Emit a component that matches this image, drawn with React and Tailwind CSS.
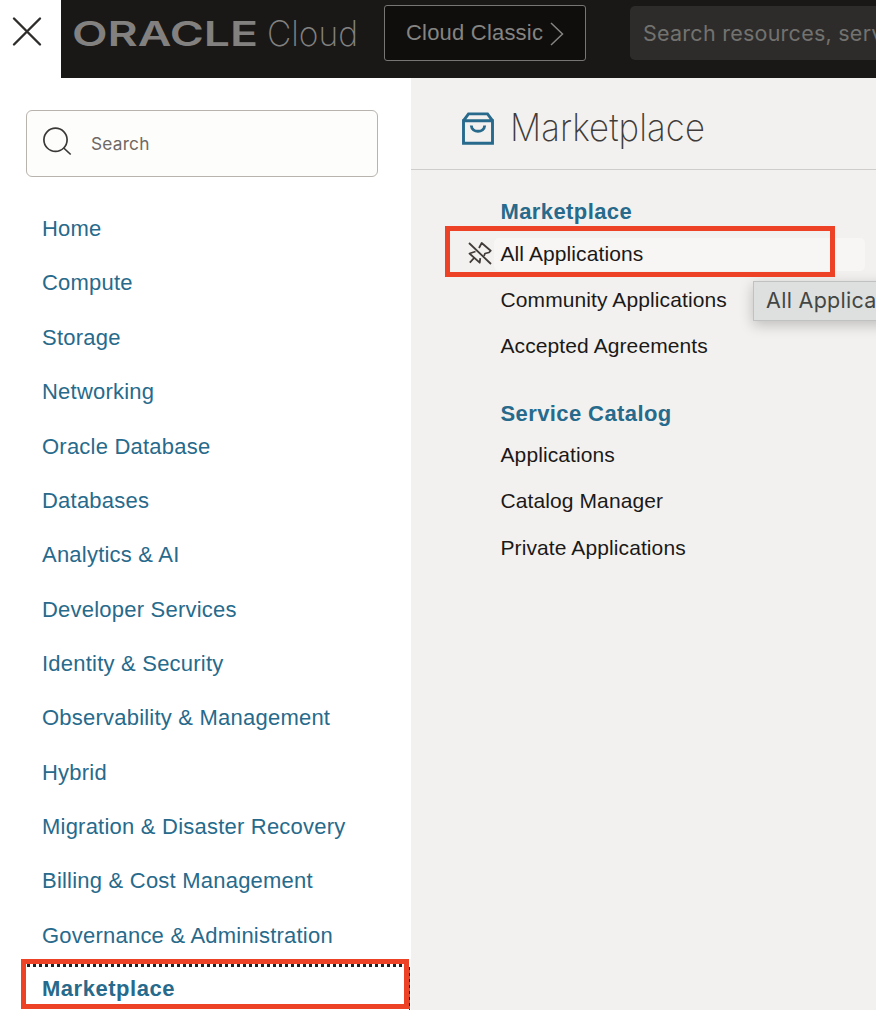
const services = [
  'Home', 'Compute', 'Storage', 'Networking', 'Oracle Database', 'Databases',
  'Analytics & AI', 'Developer Services', 'Identity & Security',
  'Observability & Management', 'Hybrid', 'Migration & Disaster Recovery',
  'Billing & Cost Management', 'Governance & Administration',
];

function Header() {
  return (
    <header className="flex h-[78px] shrink-0">
      <button aria-label="Close" className="flex w-[61px] shrink-0 items-start bg-white pl-3 pt-4">
        <svg width="30" height="31" viewBox="0 0 30 31" fill="none" stroke="#2f2d2b" strokeWidth="2.4" strokeLinecap="round">
          <path d="M2 2.5 28 28.5M28 2.5 2 28.5" />
        </svg>
      </button>
      <div className="flex min-w-0 flex-1 items-start bg-[#191816]">
        <svg className="ml-3 shrink-0" width="290" height="60" viewBox="0 -12 290 60" fill="#828180">
          <text x="-1" y="33.5" fontFamily="Inter, sans-serif" fontWeight="600" fontSize="33.5" textLength="186" lengthAdjust="spacingAndGlyphs">ORACLE</text>
          <text x="194" y="33.5" fontFamily="Inter, sans-serif" fontWeight="200" fontSize="35" textLength="91" lengthAdjust="spacingAndGlyphs">Cloud</text>
        </svg>
        <button className="ml-[21px] mt-[5px] flex h-14 w-[202px] shrink-0 items-center rounded-[3px] border border-[#777674] bg-[#0f0e0c] pl-[21px] text-[22px] tracking-[0.2px] text-[#858482]">
          <span className="whitespace-nowrap pb-0.5">Cloud Classic</span>
          <svg className="ml-1.5 mt-0.5" width="16" height="24" viewBox="0 0 16 24" fill="none" stroke="#858482" strokeWidth="1.5">
            <path d="M2 1 13.5 12 2 23" />
          </svg>
        </button>
        <div className="ml-11 mt-1.5 flex h-[54px] min-w-0 flex-1 items-center overflow-hidden rounded-l-[5px] bg-[#2d2c2b] pl-[13px] font-[Inter,sans-serif] text-[21.5px] tracking-[0.25px] text-[#73726f]">
          <span className="whitespace-nowrap">Search resources, services, docs</span>
        </div>
      </div>
    </header>
  );
}

function Sidebar() {
  return (
    <aside className="w-[411px] shrink-0 bg-white pt-8 text-[22px] tracking-[0.22px] text-[#276a8b]">
      <div className="ml-[26px] flex h-[67px] w-[352px] items-center rounded-md border border-[#b8b3ad] bg-[#fdfdfb] pl-4">
        <svg className="-mt-1 shrink-0" width="29" height="29" viewBox="0 0 29 29" fill="none" stroke="#3b3937" strokeWidth="1.7">
          <circle cx="12.5" cy="12.8" r="11.6" />
          <path d="m20.7 21 7 6.5" />
        </svg>
        <span className="ml-[19px] font-[Inter,sans-serif] text-[17.3px] tracking-[0.2px] text-[#706864]">Search</span>
      </div>
      <nav className="mt-[24.4px] flex flex-col">
        {services.map((s) => (
          <a key={s} className="flex h-[54.37px] items-center whitespace-nowrap pl-[42px]">{s}</a>
        ))}
        <a className="ml-[21px] flex h-[49px] w-[389px] flex-col font-bold tracking-[0.52px]">
          <span className="mt-[1.4px] h-[3px] w-full bg-[repeating-linear-gradient(90deg,#222_0_3px,#fff_3px_6px)]" />
          <span className="flex flex-1 justify-between">
            <span className="pl-[21px] pt-2 leading-7">Marketplace</span>
            <span className="w-px bg-[repeating-linear-gradient(180deg,#222_0_3px,#ee4226_3px_6px)]" />
          </span>
        </a>
      </nav>
    </aside>
  );
}

function Section({ title, children }) {
  return (
    <section>
      <h2 className="flex h-[42px] items-center whitespace-nowrap pl-[89.5px] text-[22px] font-bold tracking-[0.4px] text-[#276a8b]">{title}</h2>
      {children}
    </section>
  );
}

function Item({ children }) {
  return <a className="flex h-[46.6px] items-center whitespace-nowrap pl-[89.5px]">{children}</a>;
}

export default function App() {
  return (
    <div className="relative flex h-[1010px] w-[876px] flex-col overflow-hidden bg-white font-['Liberation_Sans',Arial,sans-serif]">
      <Header />
      <div className="flex min-h-0 flex-1">
        <Sidebar />
        <main className="min-w-0 flex-1 bg-[#f3f1ef] text-[21px] tracking-[0.1px] text-[#1b1918]">
          <div className="flex h-[92px] items-center border-b border-[#cfccca] pl-[51px] pt-2">
            <svg className="mt-0.5 shrink-0" width="32" height="33" viewBox="0 0 32 33" fill="none" stroke="#276a8b" strokeWidth="2.9">
              <path d="M1.5 8.7h29v22.6h-29zM1.5 8.7 6.5 1.9h19l5 6.8" />
              <path d="M9.3 13.5c.5 7.7 12.9 7.700 13.400 0" />
            </svg>
            <svg className="ml-4 shrink-0" width="205" height="64" viewBox="0 -9 205 64" fill="#403c39">
              <text x="0" y="36" fontFamily="Inter, sans-serif" fontWeight="200" fontSize="38" textLength="195" lengthAdjust="spacingAndGlyphs">Marketplace</text>
            </svg>
          </div>
          <div className="pt-5">
            <Section title="Marketplace">
              <a className="flex h-[44px] items-center">
                <svg className="ml-[57px] shrink-0" width="24" height="24" viewBox="0 0 24 24" fill="none" stroke="#403c39" strokeWidth="1.8" strokeLinejoin="round">
                  <path d="M1 1 23 22" />
                  <path d="m11 6 2.700-5 9 7.700-1.700 1.800-4 1-1 2.500" />
                  <path d="M7.500 9.500l-6 2 10.200 9.200.6-4.500M6.500 15.500l-4.700 5.200" />
                </svg>
                <span className="ml-[2px] flex h-[33px] w-[371px] items-center rounded-[5px] bg-[#f7f6f4] pl-[6.5px]">All Applications</span>
              </a>
              <Item>Community Applications</Item>
              <Item>Accepted Agreements</Item>
            </Section>
            <div className="h-[23px]" />
            <Section title="Service Catalog">
              <div className="-mt-[3px]">
                <Item>Applications</Item>
                <Item>Catalog Manager</Item>
                <Item>Private Applications</Item>
              </div>
            </Section>
          </div>
        </main>
      </div>
      <div className="absolute left-[753px] top-[281px] flex h-10 w-[220px] items-center border border-[#c0c2c1] bg-[#dee0df] pb-0.5 pl-3 font-[Inter,sans-serif] text-[21.5px] tracking-[0.3px] text-[#444644] shadow-[0_4px_14px_rgba(0,0,0,0.22)]">
        <span className="whitespace-nowrap">All Applications</span>
      </div>
      <div className="absolute left-[445px] top-[226px] h-[51px] w-[390px] border-[5px] border-[#ee4226]" />
      <div className="absolute left-[21px] top-[959px] h-[50px] w-[388px] border-[5px] border-[#ee4226]" />
    </div>
  );
}
